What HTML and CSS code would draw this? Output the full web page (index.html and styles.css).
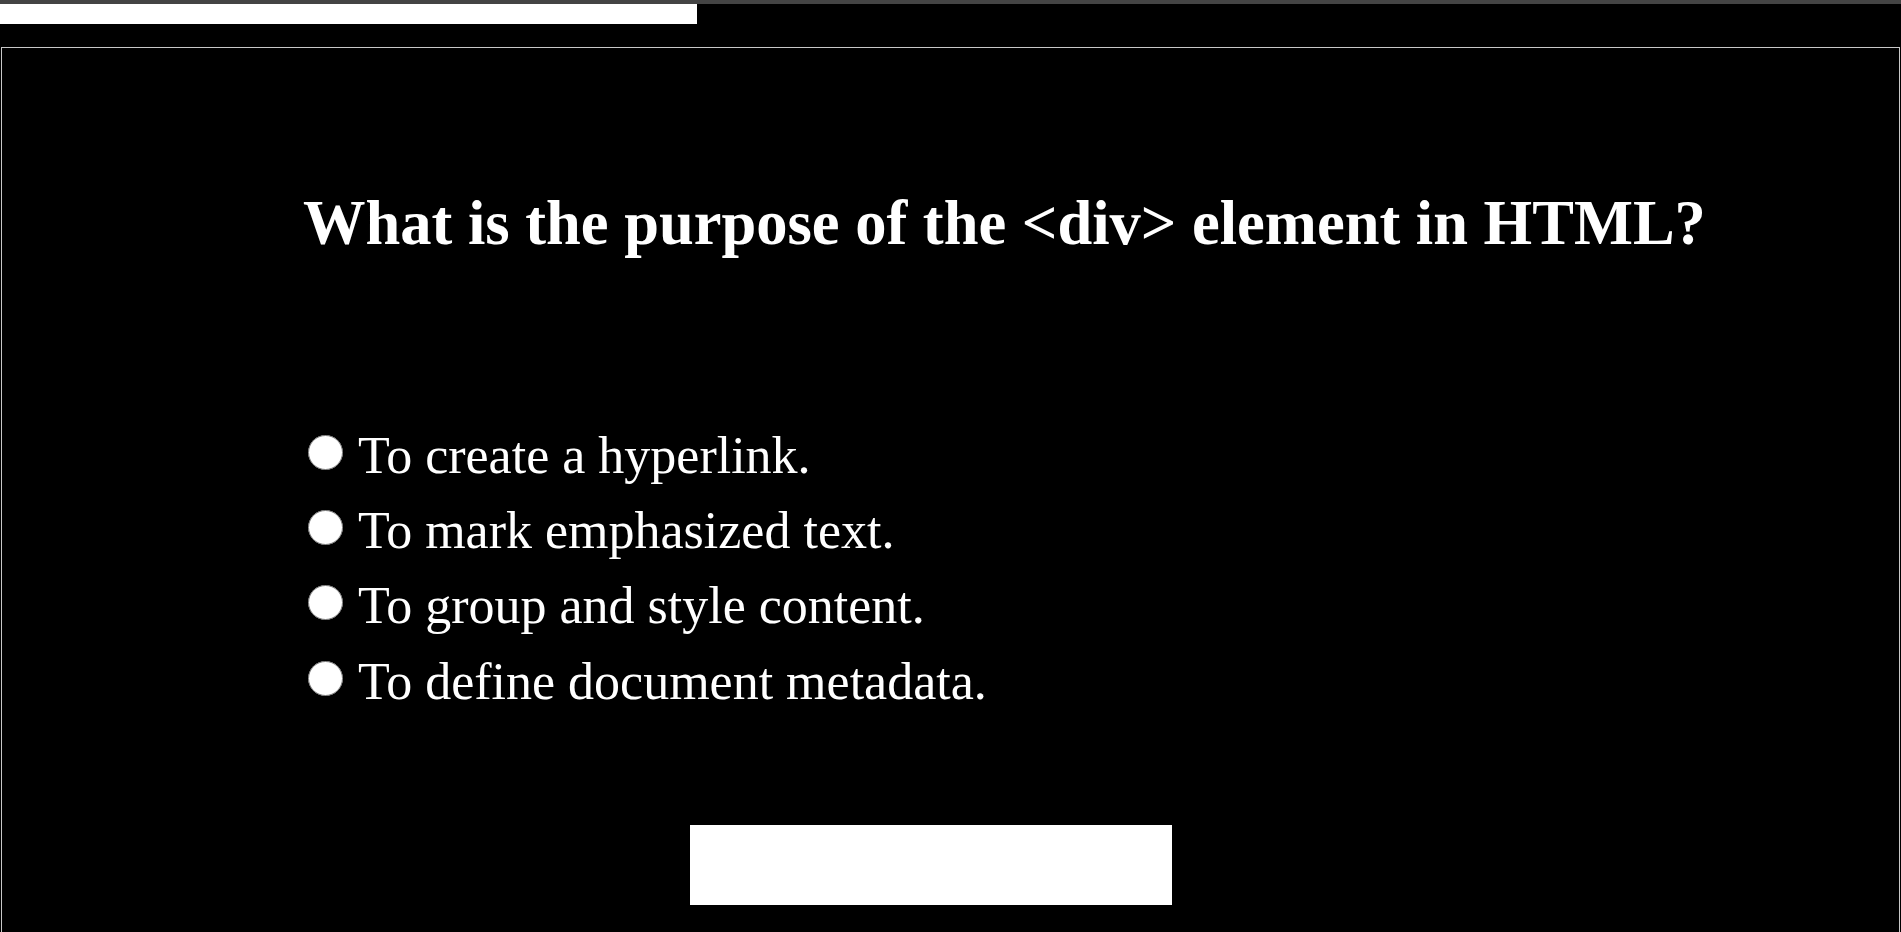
FILE: index.html
```html
<!DOCTYPE html>
<html lang="en">
<head>
<meta charset="utf-8">
<title>Quiz</title>
<link rel="stylesheet" href="styles.css">
</head>
<body>
  <div class="topline"></div>
  <div class="progress">
    <div class="progress-fill" style="width: 36.67%"></div>
  </div>
  <main class="quiz">
    <h1 class="question">What is the purpose of the &lt;div&gt; element in HTML?</h1>
    <div class="options">
      <label class="option"><input class="radio" type="radio" name="answer"><span>To create a hyperlink.</span></label>
      <label class="option"><input class="radio" type="radio" name="answer"><span>To mark emphasized text.</span></label>
      <label class="option"><input class="radio" type="radio" name="answer"><span>To group and style content.</span></label>
      <label class="option"><input class="radio" type="radio" name="answer"><span>To define document metadata.</span></label>
    </div>
    <button class="submit" type="button" aria-label="Submit"></button>
  </main>
</body>
</html>
```

FILE: styles.css
```css
html, body {
  margin: 0;
  padding: 0;
  background: #000;
  color: #fff;
  font-family: "Liberation Serif", "Times New Roman", serif;
  overflow: hidden;
}

.topline {
  height: 4px;
  background: #444;
}

.progress {
  height: 20px;
  margin-bottom: 23px;
}

.progress-fill {
  height: 100%;
  background: #fff;
}

.quiz {
  margin: 0 1px;
  border: 1px solid #c8c8c8;
  border-bottom: none;
  padding: 140px 0 0 301px;
  height: 900px;
  box-sizing: border-box;
  display: flex;
  flex-direction: column;
  align-items: flex-start;
}

.question {
  margin: 0;
  font-size: 62.5px;
  line-height: 1.15;
  font-weight: bold;
}

.options {
  margin-top: 166px;
  display: flex;
  flex-direction: column;
  gap: 15.5px;
}

.option {
  display: flex;
  align-items: flex-start;
  font-size: 52px;
  line-height: 1.15;
}

.radio {
  width: 35px;
  height: 35px;
  margin: 9px 15px 0 5px;
  flex: none;
}

.submit {
  margin-top: 113px;
  margin-left: 387px;
  width: 482px;
  height: 80px;
  background: #fff;
  border: none;
  padding: 0;
}
```
